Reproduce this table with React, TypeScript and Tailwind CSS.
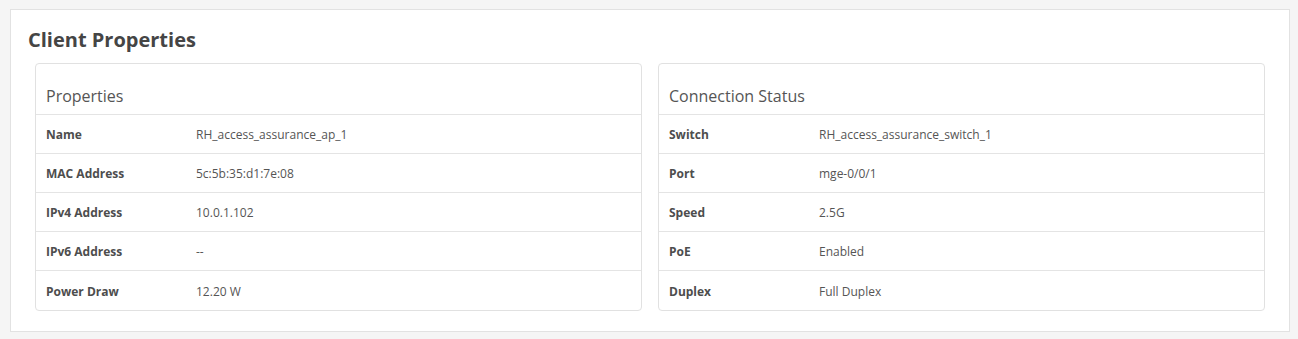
type Row = { label: string; value: string };

const PROPERTIES: Row[] = [
    { label: 'Name', value: 'RH_access_assurance_ap_1' },
    { label: 'MAC Address', value: '5c:5b:35:d1:7e:08' },
    { label: 'IPv4 Address', value: '10.0.1.102' },
    { label: 'IPv6 Address', value: '--' },
    { label: 'Power Draw', value: '12.20 W' },
];

const CONNECTION: Row[] = [
    { label: 'Switch', value: 'RH_access_assurance_switch_1' },
    { label: 'Port', value: 'mge-0/0/1' },
    { label: 'Speed', value: '2.5G' },
    { label: 'PoE', value: 'Enabled' },
    { label: 'Duplex', value: 'Full Duplex' },
];

const InfoCard = ({ title, rows }: { title: string; rows: Row[] }) => {
    return (
        <div className="border border-[#e1e1e1] rounded-[4px] bg-white">
            <div className="h-[51px] border-b border-[#e4e4e4] px-[10px] pt-[22px]">
                <p className="text-[16px] leading-[20px] text-[#555]">{title}</p>
            </div>
            <div className="divide-y divide-[#e4e4e4]">
                {rows.map(row => {
                    return <div key={row.label} className="h-[39px] flex items-center px-[10px] pt-[2px] text-[12px]">
                        <span className="w-[150px] font-bold text-[#4d4d4d]">{row.label}</span>
                        <span className="text-[#555]">{row.value}</span>
                    </div>
                })}
            </div>
        </div>
    )
}

const App = () => {
    return (
        <div className="min-h-screen bg-[#f5f5f5] pt-[9px] pl-[10px]" style={{ fontFamily: '"Open Sans", sans-serif' }}>
            <div className="w-[1280px] bg-white border border-[#e2e2e2] pb-[20px]">
                <h2 className="h-[53px] pt-[16px] px-[17px] text-[20px] leading-[28px] font-bold text-[#454545]">Client Properties</h2>
                <div className="grid grid-cols-2 gap-[16px] px-[24px]">
                    <InfoCard title="Properties" rows={PROPERTIES} />
                    <InfoCard title="Connection Status" rows={CONNECTION} />
                </div>
            </div>
        </div>
    )
}

export default App
